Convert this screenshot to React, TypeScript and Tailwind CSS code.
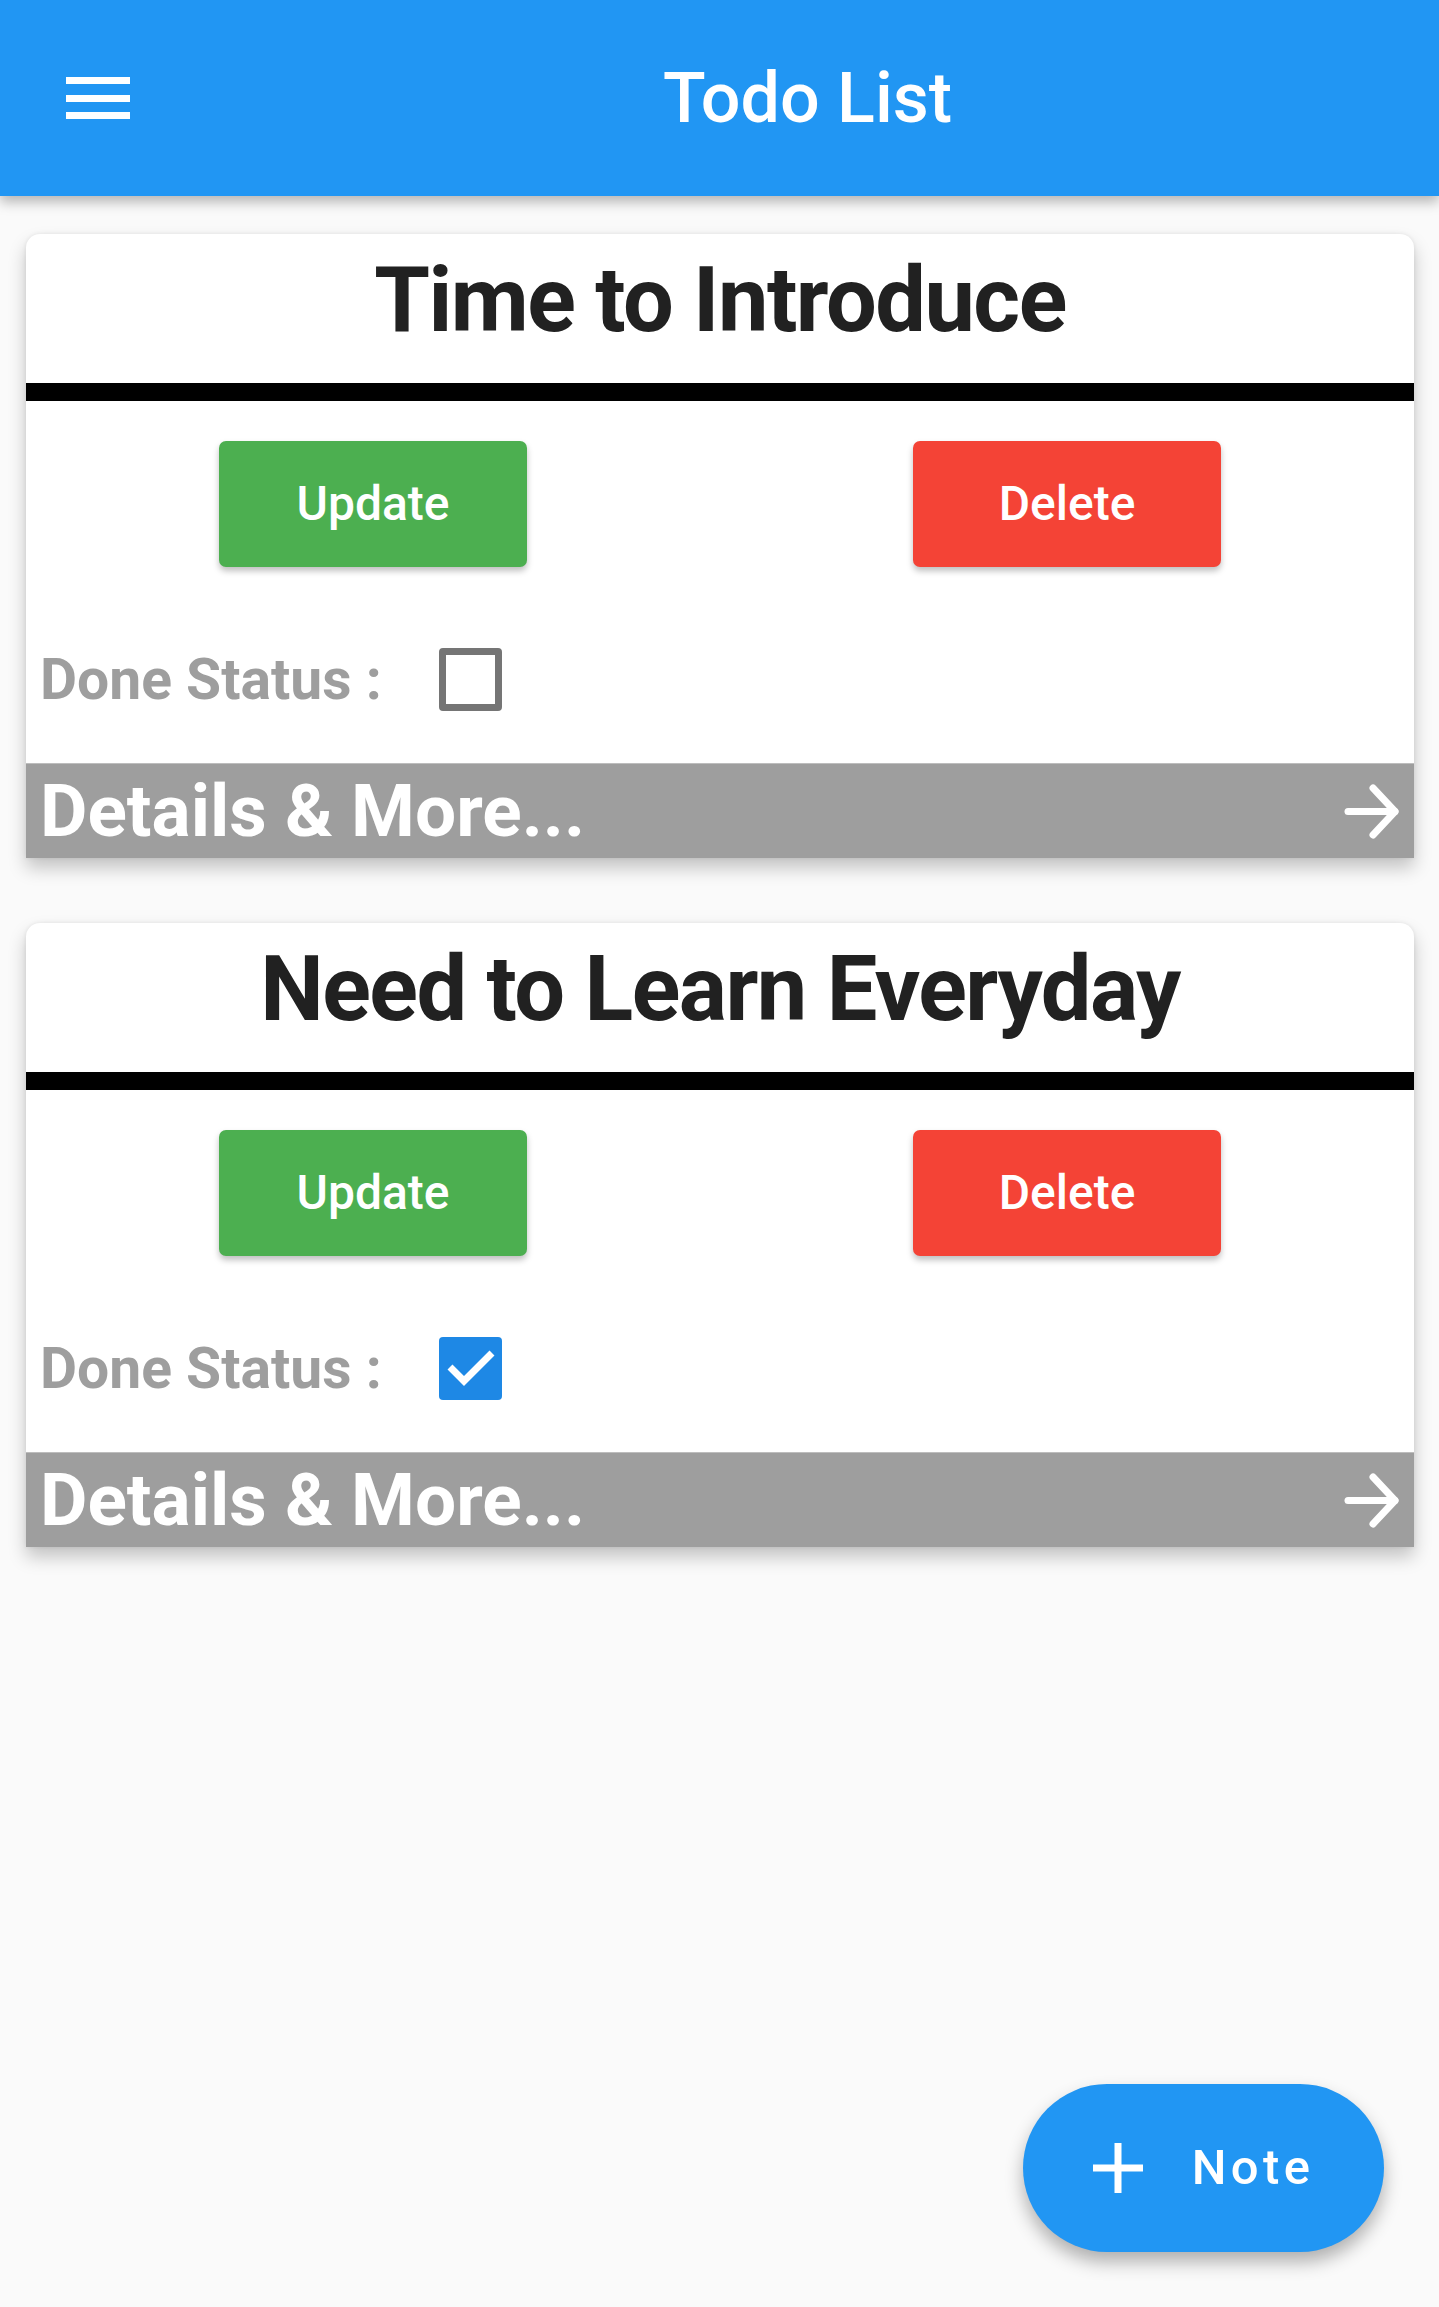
import React from "react";

type Todo = {
  title: string;
  done: boolean;
};

const TODOS: Todo[] = [
  { title: "Time to Introduce", done: false },
  { title: "Need to Learn Everyday", done: true },
];

function MenuIcon() {
  return (
    <svg width="64" height="42" viewBox="0 0 64 42" fill="#ffffff">
      <rect x="0" y="0" width="64" height="7" />
      <rect x="0" y="18" width="64" height="7" />
      <rect x="0" y="35" width="64" height="7" />
    </svg>
  );
}

function ArrowIcon() {
  return (
    <svg width="55" height="55" viewBox="0 0 55 55" fill="none" stroke="#ffffff" strokeWidth="7" strokeLinecap="round" strokeLinejoin="round">
      <path d="M4 27.5H51" />
      <path d="M29 4L51 27.5L29 51" />
    </svg>
  );
}

function Checkbox({ checked }: { checked: boolean }) {
  if (!checked) {
    return <div className="w-[63px] h-[63px] border-[7px] border-[#757575] rounded-[4px] bg-white" />;
  }
  return (
    <div className="w-[63px] h-[63px] rounded-[4px] bg-[#1E88E5]">
      <svg width="63" height="63" viewBox="0 0 63 63" fill="none" stroke="#ffffff" strokeWidth="7">
        <polyline points="11,30 25,44 53,16" />
      </svg>
    </div>
  );
}

function TodoCard({ todo }: { todo: Todo }) {
  return (
    <div className="bg-white rounded-t-[14px] shadow-[0_10px_18px_rgba(0,0,0,0.22),0_0_4px_rgba(0,0,0,0.08)]">
      {/* Title */}
      <div className="pt-[14px] pb-[29px] text-center text-[90px] leading-[106px] font-bold tracking-[-1.5px] text-[#212121]">
        {todo.title}
      </div>
      <div className="h-[18px] bg-black" />

      {/* Actions */}
      <div className="flex mt-[40px]">
        <div className="flex-1 flex justify-center">
          <button className="w-[308px] h-[126px] rounded-[7px] bg-[#4CAF50] text-white text-[48px] font-medium shadow-[0_4px_6px_rgba(0,0,0,0.25)]">
            Update
          </button>
        </div>
        <div className="flex-1 flex justify-center">
          <button className="w-[308px] h-[126px] rounded-[7px] bg-[#F44336] text-white text-[48px] font-medium shadow-[0_4px_6px_rgba(0,0,0,0.25)]">
            Delete
          </button>
        </div>
      </div>

      {/* Done status */}
      <div className="flex items-center mt-[81px] h-[63px] pl-[14px]">
        <span className="text-[57px] font-bold text-[#9E9E9E]">Done Status :</span>
        <div className="ml-[57px]">
          <Checkbox checked={todo.done} />
        </div>
      </div>

      {/* Details bar */}
      <div className="mt-[52px] h-[95px] bg-[#9E9E9E] border-t border-[#BDBDBD] flex items-center justify-between pl-[14px] pr-[15px]">
        <span className="text-[73px] leading-[86px] font-bold text-white">Details &amp; More...</span>
        <ArrowIcon />
      </div>
    </div>
  );
}

export default function App() {
  return (
    <div className="relative h-[2307px] overflow-hidden bg-[#FAFAFA] font-['Roboto','Noto_Sans',sans-serif]">
      {/* App bar */}
      <header className="relative z-10 h-[196px] bg-[#2196F3] flex items-center shadow-[0_6px_12px_rgba(0,0,0,0.28)]">
        <div className="w-[196px] pl-[66px] flex items-center">
          <MenuIcon />
        </div>
        <h1 className="flex-1 pr-[20px] text-center text-[70px] font-medium text-white">Todo List</h1>
      </header>

      {/* List */}
      <div className="flex flex-col gap-[65px] pt-[38px] pl-[26px] pr-[25px]">
        {TODOS.map((t) => (
          <TodoCard key={t.title} todo={t} />
        ))}
      </div>

      {/* FAB */}
      <button className="absolute right-[55px] bottom-[55px] w-[361px] h-[168px] rounded-full bg-[#2196F3] flex items-center justify-center shadow-[0_10px_18px_rgba(0,0,0,0.3)]">
        <svg width="50" height="50" viewBox="0 0 50 50" fill="#ffffff">
          <rect x="21.5" y="0" width="7" height="50" />
          <rect x="0" y="21.5" width="50" height="7" />
        </svg>
        <span className="ml-[49px] text-[49px] font-medium text-white tracking-[4.4px]">Note</span>
      </button>
    </div>
  );
}
